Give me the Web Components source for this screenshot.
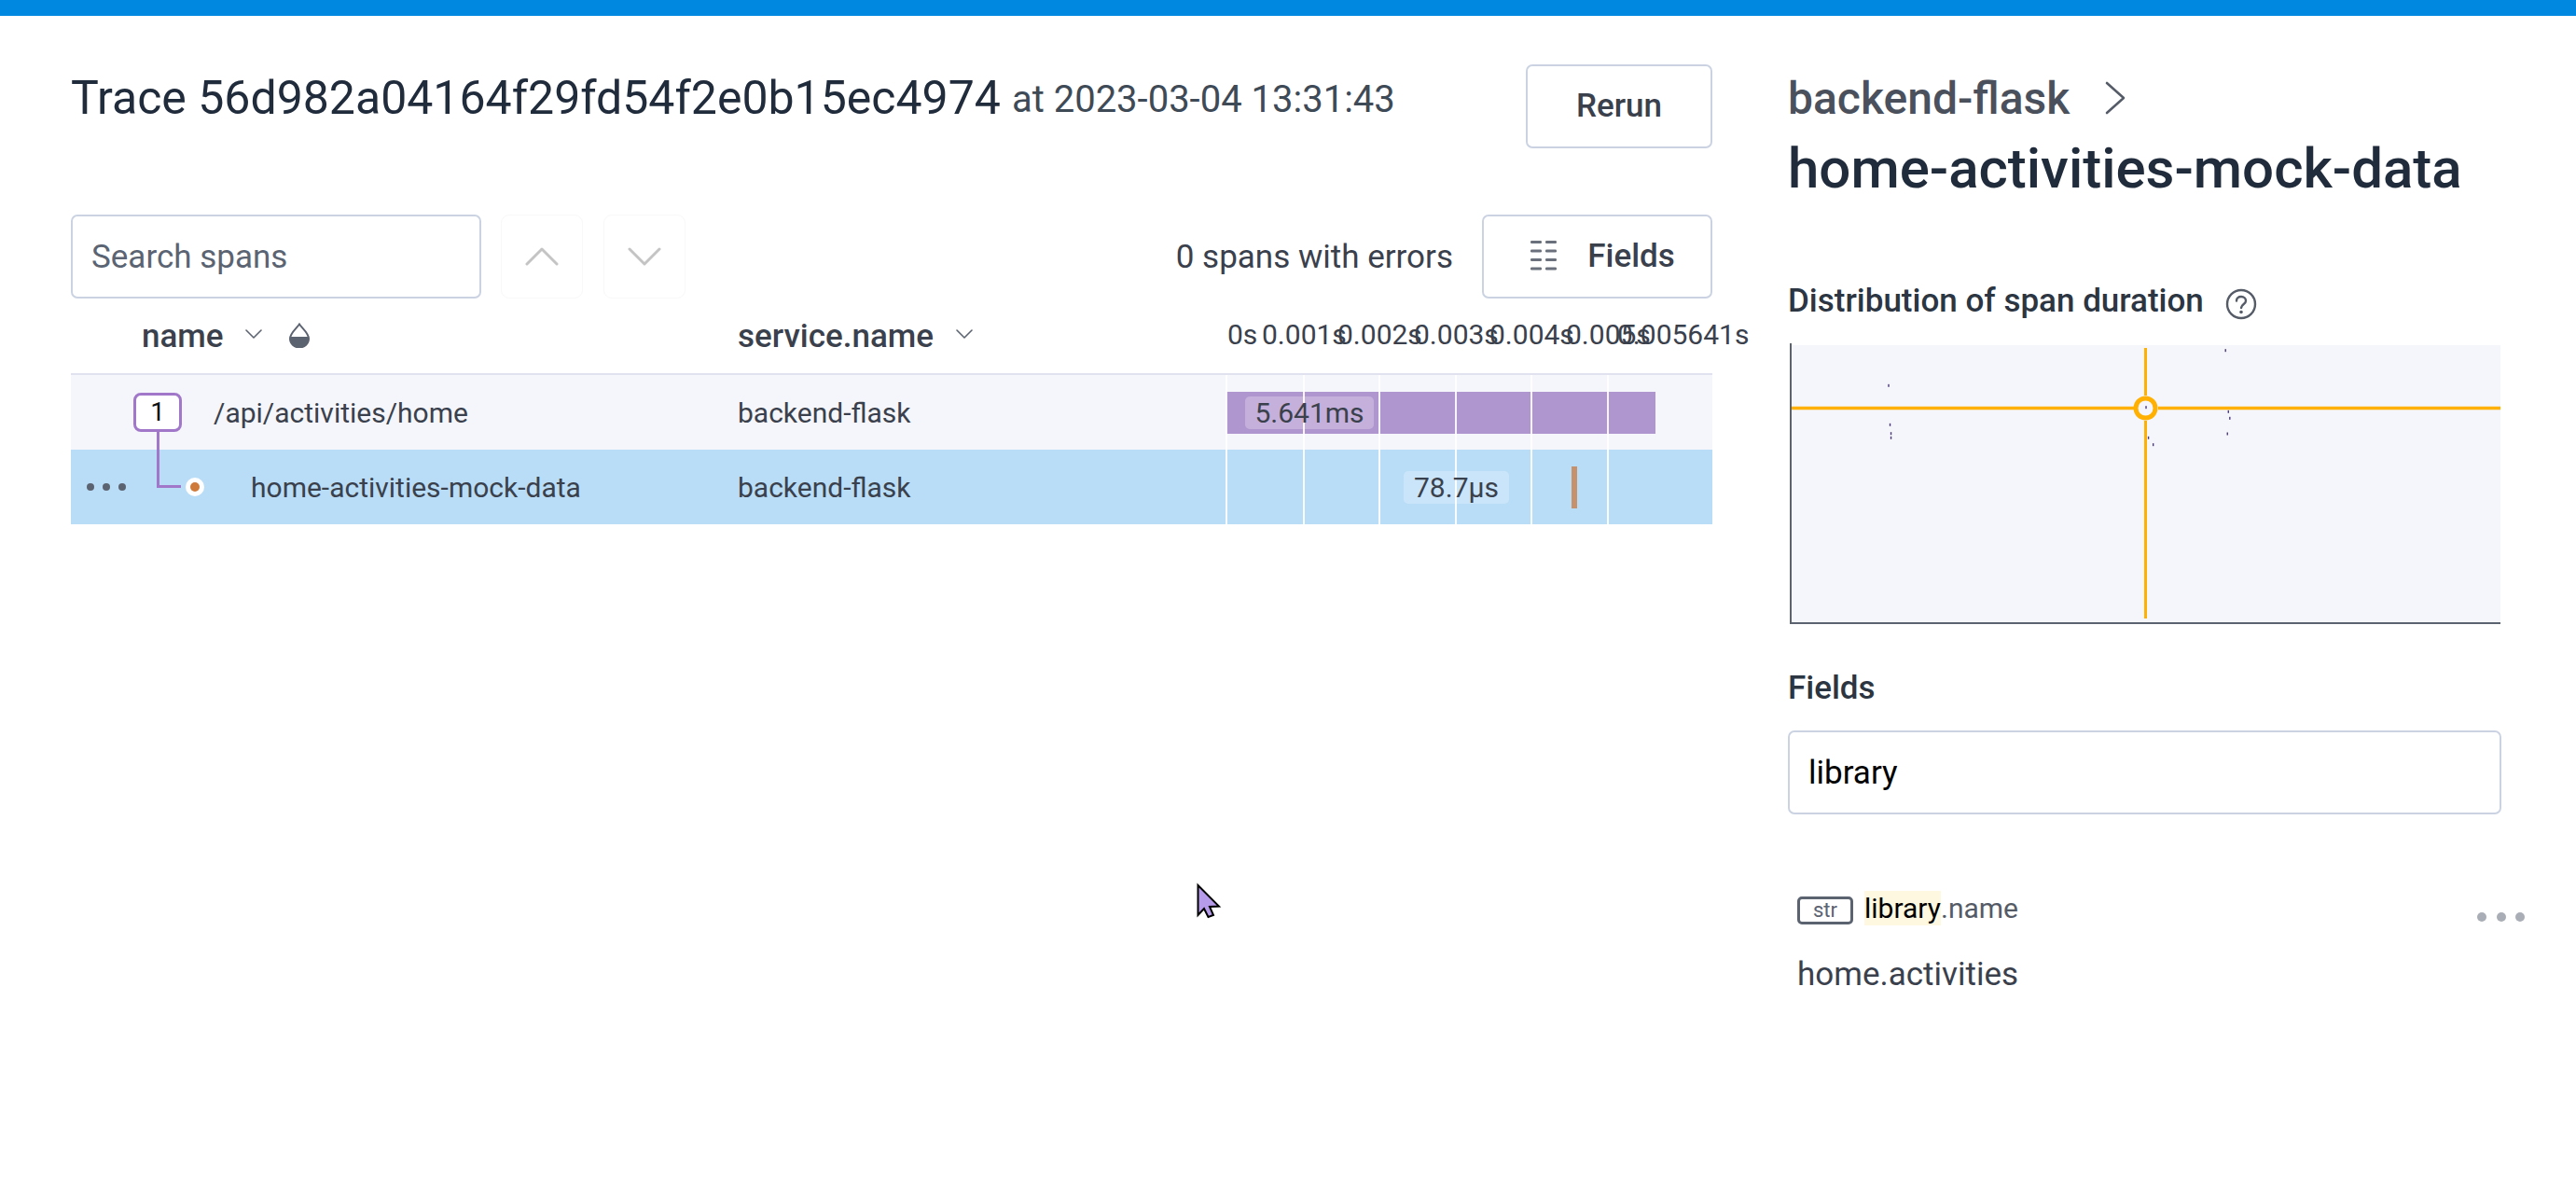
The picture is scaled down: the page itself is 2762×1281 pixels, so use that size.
<!doctype html>
<html lang="en"><head><meta charset="utf-8"><title>Trace</title>
<style>
html,body{margin:0;padding:0;background:#fff;height:100%;overflow:hidden}
body{font-family:Roboto,"Liberation Sans",sans-serif;color:#3a414c}
</style></head><body>
<trace-app>
  <trace-pane slot="left">
    <trace-heading>
      <span slot="title">Trace 56d982a04164f29fd54f2e0b15ec4974</span>
      <span slot="time">at 2023-03-04 13:31:43</span>
      <ui-button slot="action" style="width:200px">Rerun</ui-button>
    </trace-heading>
    <trace-toolbar>
      <ui-input slot="search" placeholder style="width:440px">Search spans</ui-input>
      <nav-button slot="nav" dir="up"></nav-button>
      <nav-button slot="nav" dir="down"></nav-button>
      <span slot="errors">0 spans with errors</span>
      <ui-button slot="fields" style="width:247px" icon>Fields</ui-button>
    </trace-toolbar>
    <span-table>
      <span-row kind="root" service="backend-flask" dur="5.641ms">/api/activities/home</span-row>
      <span-row kind="child" service="backend-flask" dur="78.7µs">home-activities-mock-data</span-row>
    </span-table>
  </trace-pane>
  <detail-pane slot="right"></detail-pane>
</trace-app>
<mouse-cursor></mouse-cursor>
<script>
function define(tag, css, html){
  class El extends HTMLElement{
    constructor(){super();const r=this.attachShadow({mode:'open'});r.innerHTML='<style>'+css+'</style>'+(typeof html==='string'?html:'');}
    connectedCallback(){ if(typeof html==='function'){ this.shadowRoot.innerHTML='<style>'+css+'</style>'+html(this);} }
  }
  customElements.define(tag,El);
}
const CHEV=(w,h,sw,c,pts)=>`<svg width="${w}" height="${h}" viewBox="0 0 ${w} ${h}" fill="none"><path d="${pts}" stroke="${c}" stroke-width="${sw}" stroke-linecap="round" stroke-linejoin="round"/></svg>`;

define('trace-app',`
:host{display:flex;flex-direction:column;height:1281px;box-sizing:border-box;border-top:17px solid #0087df}
.cols{display:grid;grid-template-columns:1760px 765px;column-gap:81px;padding-left:76px}
`,`<div class="cols"><slot name="left"></slot><slot name="right"></slot></div>`);

define('trace-pane',`:host{display:flex;flex-direction:column}`,`<slot></slot>`);

define('trace-heading',`
:host{display:flex;align-items:flex-start;justify-content:space-between;height:213px;box-sizing:border-box;padding-top:52px}
.t{display:flex;align-items:flex-start;gap:12px}
::slotted([slot=title]){font-size:50px;color:#202b3b;line-height:72px}
::slotted([slot=time]){font-size:40px;color:#3f4a57;line-height:75px}
`,`<div class="t"><slot name="title"></slot><slot name="time"></slot></div><slot name="action"></slot>`);

define('ui-button',`
:host{display:inline-flex;align-items:center;justify-content:center;box-sizing:border-box;height:90px;border:2px solid #cbd3e3;border-radius:7px;background:#fff;font-size:35px;font-weight:500;color:#3a414c;padding-bottom:2px}
.i{display:none;margin-right:33px}
:host([icon]) .i{display:block}
:host([icon]) {padding-left:12px}
`,`<svg class="i" width="28" height="32" viewBox="0 0 28 32" fill="#6a707c"><rect x="0" y="0" width="12" height="3" rx="1.2"/><rect x="16" y="0" width="12" height="3" rx="1.2"/><rect x="0" y="9.5" width="12" height="3" rx="1.2"/><rect x="16" y="9.5" width="12" height="3" rx="1.2"/><rect x="0" y="19" width="12" height="3" rx="1.2"/><rect x="16" y="19" width="12" height="3" rx="1.2"/><rect x="0" y="28.5" width="12" height="3" rx="1.2"/><rect x="16" y="28.5" width="12" height="3" rx="1.2"/></svg><slot></slot>`);

define('ui-input',`
:host{display:flex;align-items:center;box-sizing:border-box;height:90px;border:2px solid #cbd3e3;border-radius:7px;background:#fff;padding-left:20px;font-size:35px;color:#000}
:host([placeholder]){color:#5b6472}
`,`<slot></slot>`);

define('nav-button',`
:host{display:flex;align-items:center;justify-content:center;box-sizing:border-box;width:88px;height:90px;border:1.5px solid #f8f8f8;border-radius:9px}
`,el=>el.getAttribute('dir')==='up'
  ? CHEV(36,20,3,'#c4c4c4','M2 18 L18 2 L34 18')
  : `<div style="padding-top:4px">`+CHEV(36,20,3,'#c4c4c4','M2 2 L18 18 L34 2')+`</div>`);

define('trace-toolbar',`
:host{display:flex;align-items:center;height:90px}
.nav{display:flex;gap:22px;margin-left:21px}
.sp{flex:1}
::slotted([slot=errors]){font-size:35px;color:#3a414c;margin-right:31px}
`,`<slot name="search"></slot><div class="nav"><slot name="nav"></slot></div><div class="sp"></div><slot name="errors"></slot><slot name="fields"></slot>`);

define('span-table',`
:host{display:block;position:relative}
.head{display:grid;grid-template-columns:715px 524px 1fr;height:80px;border-bottom:2px solid #e0e2ef;align-items:center;font-size:35px;font-weight:500;color:#3a414c}
.a{display:flex;align-items:center;padding-left:76px}
.b{display:flex;align-items:center}
.c1{margin-left:23px;margin-top:-4px;display:flex}.drop{margin-left:29px;margin-top:-2px}
.c2{margin-left:24px;margin-top:-4px;display:flex}
tick-axis{position:absolute;left:1239px;top:0;right:-40px;height:80px}
`,`<div class="head"><div class="a"><span>name</span><span class="c1">${CHEV(18,10,1.6,'#5c6370','M1 1 L9 9 L17 1')}</span>
<svg class="drop" width="22" height="27" viewBox="0 0 22 27"><path d="M11 1.5 C14 6 21 11 21 17 A10 9.5 0 0 1 1 17 C1 11 8 6 11 1.5 Z" fill="none" stroke="#5c6370" stroke-width="2"/><path d="M1 15 H21 V17 A10 9.5 0 0 1 1 17 Z" fill="#5c6370"/></svg></div>
<div class="b"><span>service.name</span><span class="c2">${CHEV(18,10,1.6,'#5c6370','M1 1 L9 9 L17 1')}</span></div><div></div></div>
<tick-axis></tick-axis><slot></slot>`);

define('tick-axis',`
:host{display:block;font-size:30px;color:#3a414c;font-weight:400}
span{position:absolute;top:19px;line-height:40px;white-space:nowrap}
`,()=>[['0s',1],['0.001s',38],['0.002s',119],['0.003s',201],['0.004s',282],['0.005s',364],['0.005641s',419]].map(([t,x])=>`<span style="left:${x}px">${t}</span>`).join(''));

define('span-row',`
:host{display:grid;grid-template-columns:715px 524px 1fr;height:80px;align-items:center;font-size:30px;color:#3a414c;position:relative}
:host([kind=root]){background:#f5f6fb}
:host([kind=child]){background:#b9ddf7}
.n{display:flex;align-items:center}
:host([kind=root]) .n{padding-left:67px;gap:34px}
:host([kind=child]) .n{padding-left:193px}
.box{box-sizing:border-box;width:52px;height:42px;border:3px solid #a178c9;border-radius:8px;background:#fff;color:#111;display:flex;align-items:center;justify-content:center;font-size:28px;margin-top:-1px}
.tl{position:relative;height:80px;align-self:stretch}
.g{position:absolute;top:0;bottom:0;width:2px;background:#fff;opacity:.9;z-index:2}
.bar{position:absolute;top:18px;height:45px}
.lab{position:absolute;height:35px;line-height:35px;border-radius:5px;box-sizing:border-box;text-align:center;z-index:3}
.more{position:absolute;left:17px;top:36px;display:flex;gap:9px}
.more i{width:8px;height:8px;border-radius:50%;background:#5c6370;display:block}
.conn{position:absolute;left:92px;top:-19px;width:26px;height:60px;box-sizing:border-box;border-left:3px solid #a178c9;border-bottom:3px solid #a178c9}
.dot{position:absolute;left:123px;top:30px;width:20px;height:20px;border-radius:50%;background:#fff;display:flex;align-items:center;justify-content:center}
.dot b{width:10px;height:10px;border-radius:50%;background:#cf7a3a;display:block}
`,el=>{
  const root=el.getAttribute('kind')==='root';
  const grid=[-1,82,163,245,326,408].map(x=>`<div class="g" style="left:${x}px"></div>`).join('');
  const tl=root
    ? `<div class="bar" style="left:0;width:460px;background:#b096cf"></div><div class="lab" style="left:20px;width:138px;top:23px;background:rgba(255,255,255,.25)">${el.getAttribute('dur')}</div>`
    : `<div class="bar" style="left:370px;width:6px;background:#c6916b"></div><div class="lab" style="left:190px;width:113px;top:23px;background:rgba(255,255,255,.25)">${el.getAttribute('dur')}</div>`;
  return `<div class="n">${root?'<span class="box">1</span>':''}<slot></slot></div><div>${el.getAttribute('service')}</div><div class="tl">${grid}${tl}</div>`
   +(root?'':`<div class="more"><i></i><i></i><i></i></div><div class="conn"></div><div class="dot"><b></b></div>`);
});

define('detail-pane',`
:host{display:flex;flex-direction:column;color:#202b3b}
.svc{display:flex;align-items:center;gap:38px;font-size:48px;font-weight:500;color:#4a515c;height:60px;margin-top:58px}
.name{font-size:60px;font-weight:500;color:#202b3b;line-height:76px;margin-top:8px}
.lab{font-size:35px;font-weight:500;color:#2c3542;line-height:40px}
.dist{display:flex;align-items:center;gap:23px;margin-top:84px}
ui-input{margin-top:25px}
`,`<div class="svc"><span>backend-flask</span><svg width="22" height="36" viewBox="0 0 22 36" fill="none"><path d="M2 2 L20 18 L2 34" stroke="#555c68" stroke-width="2.6" stroke-linecap="round" stroke-linejoin="round"/></svg></div>
<div class="name">home-activities-mock-data</div>
<div class="dist lab"><span>Distribution of span duration</span><svg width="34" height="34" viewBox="0 0 34 34" fill="none" style="margin-top:5px"><circle cx="17" cy="17" r="15" stroke="#555c68" stroke-width="2.4"/><path d="M12 13.5 C12 10.5 14.2 9 17 9 C20 9 22 11 22 13.5 C22 17 17.5 17 17 21" stroke="#555c68" stroke-width="2.4" stroke-linecap="round"/><circle cx="17" cy="25.5" r="1.8" fill="#555c68"/></svg></div>
<heat-chart></heat-chart>
<div class="lab" style="margin-top:48px">Fields</div>
<ui-input>library</ui-input>
<field-item key="library" rest=".name" value="home.activities"></field-item>`);

define('heat-chart',`
:host{display:block;margin-top:25px;margin-left:2px}
svg{display:block}
`,()=>{
  const pts=[[953,107],[245,220],[248,346],[250,374],[250,388],[786,290],[791,388],[801,410],[959,304],[962,325],[957,375]];
  const X=x=>x/1.96+1900-1919, Y=y=>y/3+340-368;
  return `<svg width="762" height="302" viewBox="0 0 762 302"><rect x="2" y="2" width="760" height="298" fill="#f5f6fb"/>
  <path d="M1 0 V300 H762" fill="none" stroke="#5c6370" stroke-width="2"/>
  ${pts.map(([x,y])=>`<rect x="${X(x)-.7}" y="${Y(y)-1.5}" width="1.4" height="3" fill="#4b3a7a"/>`).join('')}
  <path d="M2 69.5 H369 M395 69.5 H762" stroke="#ffb000" stroke-width="3.5" fill="none"/>
  <path d="M381.5 5 V56 M381.5 83 V295" stroke="#ffb000" stroke-width="3" fill="none"/>
  <circle cx="381.5" cy="69.5" r="10.5" fill="none" stroke="#ffb000" stroke-width="5"/></svg>`;
});

define('field-item',`
:host{display:block;position:relative;margin-top:81px;padding-left:10px}
.k{display:flex;align-items:center;height:38px;font-size:30px;color:#555b66}
.str{box-sizing:border-box;width:60px;height:30px;border:3px solid #5c6370;border-radius:5px;font-size:22px;display:flex;align-items:center;justify-content:center;margin-right:12px;margin-top:5px;color:#5c6370}
mark{background:#fff8e0;color:#000;padding:0;display:inline-block;height:37px;line-height:37px}
.v{font-size:35px;color:#3a414c;margin-top:33px;line-height:40px}
.more{position:absolute;left:739px;top:24px;display:flex;gap:10.5px}
.more i{width:10px;height:10px;border-radius:50%;background:#a9adb5;display:block}
`,el=>`<div class="k"><span class="str">str</span><mark>${el.getAttribute('key')}</mark><span>${el.getAttribute('rest')}</span></div><div class="v">${el.getAttribute('value')}</div><div class="more"><i></i><i></i><i></i></div>`);

define('mouse-cursor',`
:host{position:fixed;left:1282px;top:946px;display:block;width:30px;height:40px}
`,`<svg width="30" height="40" viewBox="0 0 30 40"><path d="M2.5 3 L25 25.5 L15 26 L19 35 L13.5 37 L9 28 L2.5 35 Z" fill="#b79beb" stroke="#000" stroke-width="2"/></svg>`);
</script>
</body></html>
